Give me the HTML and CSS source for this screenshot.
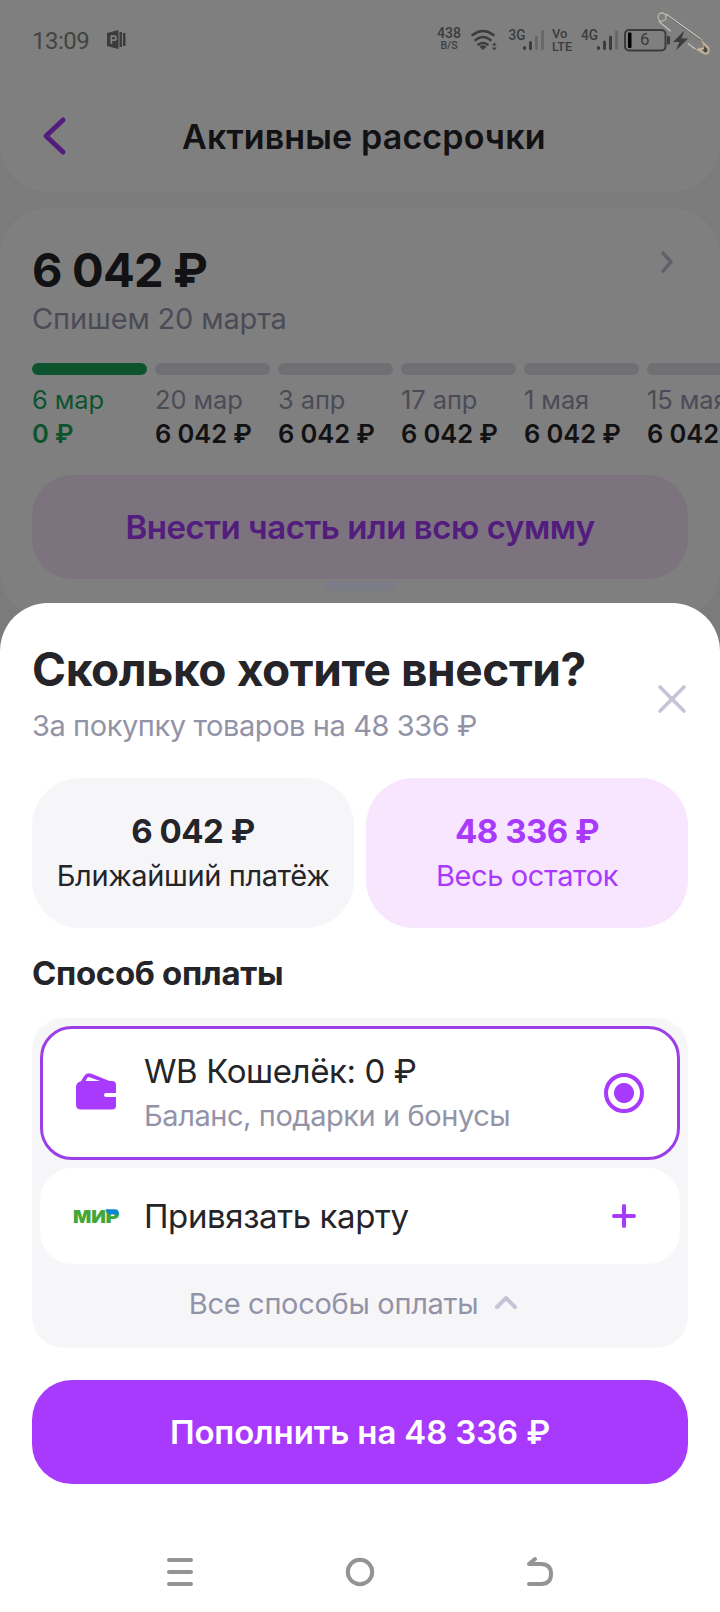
FILE: index.html
```html
<!DOCTYPE html>
<html lang="ru">
<head>
<meta charset="utf-8">
<title>Активные рассрочки</title>
<link rel="stylesheet" href="styles.css">
</head>
<body>
<div class="screen">
  <main class="page">
    <header class="header">
      <svg class="back" width="24" height="38" viewBox="0 0 24 38"><path d="M20 3 3 19l17 16"/></svg>
      <h1 class="header-title">Активные рассрочки</h1>
    </header>
    <section class="card">
      <div class="card-top">
        <div>
          <div class="card-sum">6 042 ₽</div>
          <div class="card-note">Спишем 20 марта</div>
        </div>
        <svg class="card-arrow" width="14" height="22" viewBox="0 0 14 22"><path d="m3 2 8 9-8 9"/></svg>
      </div>
      <div class="schedule">
        <div class="part paid"><i class="bar"></i><span class="date">6 мар</span><b class="amount">0 ₽</b></div>
        <div class="part"><i class="bar"></i><span class="date">20 мар</span><b class="amount">6 042 ₽</b></div>
        <div class="part"><i class="bar"></i><span class="date">3 апр</span><b class="amount">6 042 ₽</b></div>
        <div class="part"><i class="bar"></i><span class="date">17 апр</span><b class="amount">6 042 ₽</b></div>
        <div class="part"><i class="bar"></i><span class="date">1 мая</span><b class="amount">6 042 ₽</b></div>
        <div class="part"><i class="bar"></i><span class="date">15 мая</span><b class="amount">6 042 ₽</b></div>
      </div>
      <div class="soft-button">Внести часть или всю сумму</div>
    </section>
  </main>

  <div class="overlay">
    <div class="status">
      <span class="clock">13:09</span>
      <svg class="ppt" width="19" height="19" viewBox="0 0 19 19"><path fill="#3c3c3c" d="M0 3 11.500 0v19L0 16zM12.500 2H15v15h-2.500zM16 3h2.500v13H16z"/><path fill="none" stroke="#808080" stroke-width="1.700" d="M4.300 14V6.200h3.200q1.500 0 1.500 2t-1.500 2H4.300"/></svg>
      <svg class="system" width="290" height="60" viewBox="0 0 290 60">
        <g fill="#3c3c3c" font-family="Roboto, sans-serif" font-weight="500">
          <text x="7" y="28.500" font-size="14.500" textLength="24" lengthAdjust="spacingAndGlyphs">438</text>
          <text x="10.500" y="40" font-size="11" textLength="17" lengthAdjust="spacingAndGlyphs">B/S</text>
          <text x="78.500" y="30.500" font-size="14.500" textLength="17" lengthAdjust="spacingAndGlyphs">3G</text>
          <text x="122" y="29" font-size="13.500" textLength="15.500" lengthAdjust="spacingAndGlyphs">Vo</text>
          <text x="122" y="41.700" font-size="13.500" textLength="20" lengthAdjust="spacingAndGlyphs">LTE</text>
          <text x="151" y="30.500" font-size="14.500" textLength="17" lengthAdjust="spacingAndGlyphs">4G</text>
          <text x="210" y="36" font-size="17" font-weight="400">6</text>
        </g>
        <g fill="none" stroke="#3c3c3c" stroke-width="2.600" stroke-linecap="round">
          <path d="M42.500 26q10.500-8 21 0M45.500 31q7.500-6 15 0M48.500 35.500q4.500-3 9 0"/>
        </g>
        <path fill="#3c3c3c" d="m49.500 37.500 3.500 3.500 3.500-3.500q-3.500-2.500-7 0zM62 36.500l2.300-3 2.300 3zM62 38.500l2.300 3 2.300-3z"/>
        <g stroke-width="3" stroke-linecap="round">
          <path stroke="#3c3c3c" d="M94.500 38.500v1M100.500 33.500v6M168.500 38.500v1M174.500 33v6.500M180.500 28v11.500"/>
          <path stroke="#686868" d="M106.500 28v11.500M112.500 22.500v17M186.500 22.500v17"/>
        </g>
        <rect x="195" y="21" width="40.500" height="20.500" rx="4" fill="none" stroke="#3c3c3c" stroke-width="2"/>
        <rect x="198" y="23.500" width="3.500" height="15.500" rx="1" fill="#000"/>
        <rect x="237" y="27" width="3" height="8.500" rx="1" fill="#3c3c3c"/>
        <path fill="#3c3c3c" d="m254.500 21.500-11.500 11.500h6.500L246 41.500l12-12h-6.500z"/>
        <g fill="none" stroke-linecap="round">
          <circle cx="232" cy="8" r="4" stroke="#bcb6ad" stroke-width="1.300"/>
          <path stroke="#c9c5bd" stroke-width="1.100" d="m229 12.500 11.500 9.500M236 5l36 26M258 34.500l8 6"/>
          <path stroke="#5a554e" stroke-width=".6" d="m238 7.500 33 24"/>
          <path fill="#c0b19e" stroke="#8f8373" stroke-width=".8" d="m270.500 30 9 8q1.500 5-1.500 7.500-3 1.500-6-1l-7-4q4-2.500 8.500-2.500z"/>
          <path fill="#4d4740" d="m274 36.500 3.500 3.500q.5 4-2.500 3.500l-3-2.500q3 0 2-4.500z"/>
        </g>
      </svg>
    </div>
    <div class="handle"></div>
    <section class="sheet">
      <div class="sheet-head">
        <div>
          <h2 class="sheet-title">Сколько хотите внести?</h2>
          <div class="sheet-note">За покупку товаров на 48 336 ₽</div>
        </div>
        <svg class="close" width="30" height="30" viewBox="0 0 30 30"><path d="m3 3 24 24M27 3 3 27"/></svg>
      </div>
      <div class="options">
        <div class="option"><b class="option-sum">6 042 ₽</b><span class="option-label">Ближайший платёж</span></div>
        <div class="option selected"><b class="option-sum">48 336 ₽</b><span class="option-label">Весь остаток</span></div>
      </div>
      <h3 class="method-title">Способ оплаты</h3>
      <div class="methods">
        <div class="method active">
          <svg class="wallet" width="40" height="37" viewBox="0 0 40 37"><path fill="#a73afd" fill-rule="evenodd" d="M5 8.300 8 3.200Q10.500-1 15.500.8L33.500 8H36q4 0 4 4v8H30q-2 0-2 2t2 2h10v8.500q0 4-4 4H5q-5 0-5-5V14q0-4.500 5-5.700zM9.500 8H24L13.500 4.200q-1.500-.5-2.300.8z"/></svg>
          <div class="method-text">
            <div class="method-name">WB Кошелёк: 0 ₽</div>
            <div class="method-note">Баланс, подарки и бонусы</div>
          </div>
          <span class="radio"></span>
        </div>
        <div class="method link">
          <svg class="mir" width="48" height="24" viewBox="0 0 48 24">
            <g font-family="Inter, sans-serif" font-weight="900" font-size="18" fill="#43a738"><text x="0" y="18.500" textLength="33" lengthAdjust="spacingAndGlyphs">МИ</text><text x="32.500" y="18.500" textLength="14" lengthAdjust="spacingAndGlyphs">Р</text></g>
            <path fill="#0c87cf" d="M32.500 5.200h9q4.800 0 4.500 5.300h-8q-4.500 0-5.500-5.300z"/>
          </svg>
          <div class="method-name card-name">Привязать карту</div>
          <svg class="plus" width="24" height="24" viewBox="0 0 24 24"><path d="M12 2v20M2 12h20"/></svg>
        </div>
        <div class="all"><span>Все способы оплаты</span><svg width="24" height="16" viewBox="0 0 24 16"><path d="m3 12 9-9 9 9"/></svg></div>
      </div>
      <div class="pay">Пополнить на 48 336 ₽</div>
      <nav class="nav">
        <svg width="32" height="32" viewBox="0 0 32 32"><path d="M5 4h22M5 16h22M5 28h22"/></svg>
        <svg width="32" height="32" viewBox="0 0 32 32"><circle cx="16" cy="16" r="12.200"/></svg>
        <svg width="32" height="32" viewBox="0 0 32 32"><path d="M5 28h12q10 0 10-10T17 8H5l6-5"/></svg>
      </nav>
    </section>
  </div>
</div>
</body>
</html>
```
FILE: styles.css
```css
* { box-sizing: border-box; }
body { margin: 0; font-family: Inter, "Noto Sans", sans-serif; color: #242429; }
h1, h2, h3 { margin: 0; }
svg { display: block; flex: none; overflow: visible; }
.screen { position: relative; width: 720px; height: 1612px; overflow: hidden; background: #f6f6f9; white-space: nowrap; }

.page { display: flex; flex-direction: column; gap: 16px; }
.header { height: 192px; padding: 80px 40px 0; display: flex; align-items: center; background: #fff; border-radius: 0 0 48px 48px; }
.back { margin-left: 3px; }
.back path { fill: none; stroke: #a73afd; stroke-width: 5; stroke-linecap: round; stroke-linejoin: round; }
.header-title { margin: 1px 0 0 115px; font-size: 34px; line-height: 44px; font-weight: 600; letter-spacing: .15px; }
.card { padding: 34px 32px 40px; background: #fff; border-radius: 48px; }
.card-top { display: flex; justify-content: space-between; }
.card-sum { font-size: 47px; line-height: 56px; font-weight: 700; letter-spacing: -.8px; }
.card-note { padding-top: 1px; font-size: 29px; line-height: 39px; letter-spacing: -.15px; color: #9797af; }
.card-arrow { margin: 9px 14px 0 0; }
.card-arrow path { fill: none; stroke: #c5c3d6; stroke-width: 3.6; stroke-linecap: round; stroke-linejoin: round; }
.schedule { display: flex; gap: 8px; margin: 25px -32px 24px 0; overflow: hidden; }
.part { flex: none; width: 115px; display: flex; flex-direction: column; }
.bar { height: 12px; margin-bottom: 8px; border-radius: 6px; background: #dfdee9; }
.date { font-size: 25.500px; line-height: 34px; letter-spacing: -.1px; color: #9797af; }
.amount { font-size: 25.500px; line-height: 34px; font-weight: 600; letter-spacing: -.1px; }
.paid .bar { background: #1aa95c; }
.paid .date, .paid .amount { color: #1aa95c; }
.soft-button { height: 104px; display: flex; align-items: center; justify-content: center; border-radius: 40px; background: #f8e6fe; color: #a73afd; font-size: 33px; font-weight: 600; letter-spacing: -.45px; }

.overlay { position: absolute; inset: 0; display: flex; flex-direction: column; background: rgba(0, 0, 0, .5); }
.status { height: 80px; padding-left: 32px; display: flex; }
.clock { width: 75px; padding-top: 26px; font: 400 24px/30px Roboto, sans-serif; letter-spacing: -.5px; color: #434343; }
.ppt { margin-top: 30px; }
.system { margin: 9px 0 0 auto; }
.handle { width: 72px; height: 10px; margin: 501px auto 12px; border-radius: 5px; background: #7b7c88; }

.sheet { flex: 1; padding: 38px 32px 0; background: #fff; border-radius: 48px 48px 0 0; }
.sheet-head { display: flex; justify-content: space-between; }
.sheet-title { font-size: 46px; line-height: 56px; font-weight: 700; letter-spacing: -.4px; }
.sheet-note { margin-top: 9px; font-size: 29px; line-height: 39px; letter-spacing: -.42px; color: #9393a8; }
.close { margin: 43px 1px 0 0; }
.close path { fill: none; stroke: #c5c3d6; stroke-width: 3.6; stroke-linecap: round; }
.options { display: grid; grid-template-columns: 1fr 1fr; gap: 12px; margin-top: 33px; }
.option { height: 150px; padding-top: 32px; display: flex; flex-direction: column; align-items: center; gap: 4px; border-radius: 48px; background: #f6f6f9; }
.selected { background: #f8e6fe; color: #a73afd; }
.option-sum { font-size: 33px; line-height: 42px; font-weight: 700; letter-spacing: -.5px; }
.option-label { font-size: 29px; line-height: 40px; letter-spacing: -.38px; }
.method-title { margin: 24px 0; font-size: 33px; line-height: 42px; font-weight: 700; letter-spacing: -.35px; }
.methods { height: 330px; padding: 8px; display: flex; flex-direction: column; border-radius: 32px; background: #f6f6f9; }
.method { flex: none; display: flex; align-items: center; border-radius: 32px; background: #fff; }
.active { height: 134px; border: 3px solid #9d3fe8; padding: 0 33px; }
.wallet { margin-top: -4px; }
.method-text { flex: 1; margin-left: 28px; padding-bottom: 1px; }
.method-name { font-size: 33px; line-height: 44px; letter-spacing: -.4px; }
.method-note { margin-top: 3px; font-size: 29px; line-height: 40px; letter-spacing: -.43px; color: #9393a8; }
.radio { width: 40px; height: 40px; border: 4px solid #a73afd; border-radius: 50%; background: radial-gradient(circle, #a73afd 9.500px, transparent 10.500px); }
.link { height: 96px; margin-top: 8px; padding: 0 44px 0 33px; }
.card-name { flex: 1; margin-left: 23px; }
.plus path { fill: none; stroke: #a73afd; stroke-width: 4; stroke-linecap: round; }
.all { height: 80px; padding: 2px 13px 0 0; display: flex; align-items: center; justify-content: center; gap: 16px; font-size: 29px; letter-spacing: -.3px; color: #9393a8; }
.all path { fill: none; stroke: #c5c3d6; stroke-width: 4; stroke-linecap: round; stroke-linejoin: round; }
.pay { height: 104px; margin-top: 32px; display: flex; align-items: center; justify-content: center; border-radius: 40px; background: #a73afd; color: #fff; font-size: 33px; font-weight: 600; letter-spacing: -.15px; }
.nav { height: 80px; margin-top: 48px; padding: 0 132px; display: flex; align-items: center; justify-content: space-between; }
.nav path, .nav circle { fill: none; stroke: #949494; stroke-width: 4; stroke-linecap: round; stroke-linejoin: round; }
```
